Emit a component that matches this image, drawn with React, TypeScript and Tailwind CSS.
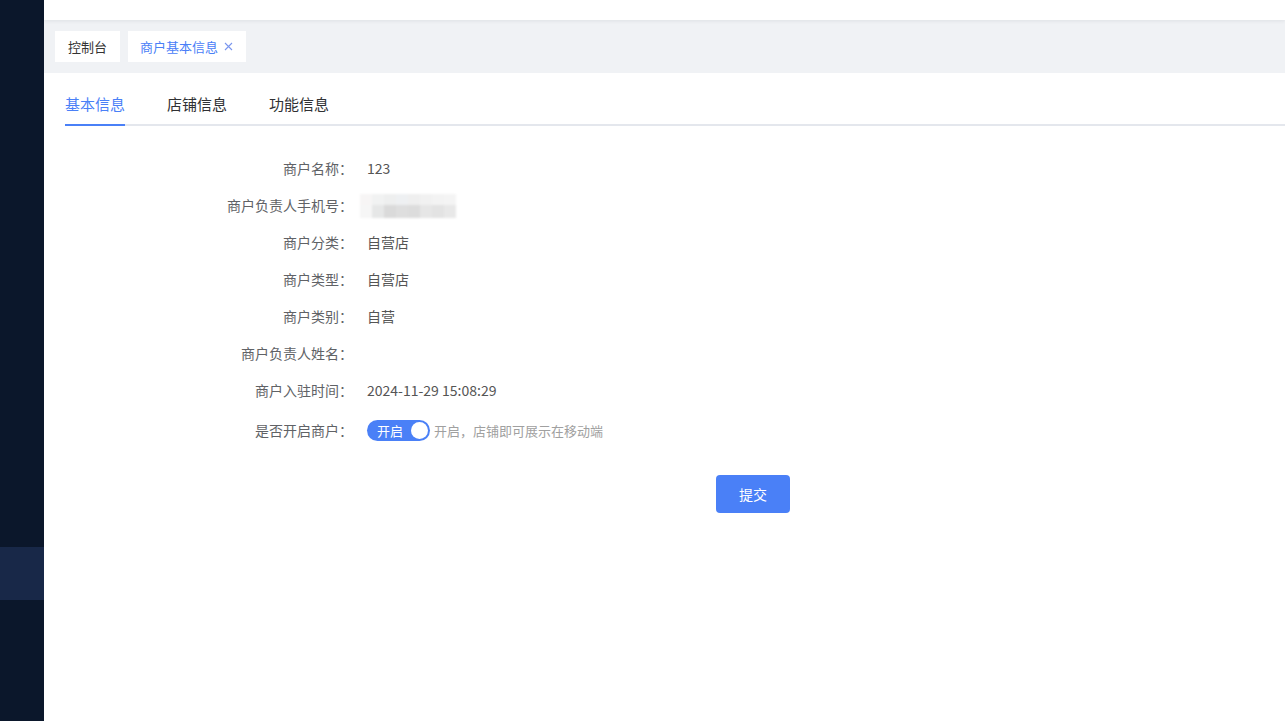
import React from "react";

const rows: { label: string; value?: string; kind?: string }[] = [
  { label: "商户名称：", value: "123" },
  { label: "商户负责人手机号：", kind: "blur" },
  { label: "商户分类：", value: "自营店" },
  { label: "商户类型：", value: "自营店" },
  { label: "商户类别：", value: "自营" },
  { label: "商户负责人姓名：", value: "" },
  { label: "商户入驻时间：", value: "2024-11-29 15:08:29" },
  { label: "是否开启商户：", kind: "switch" },
];

const BlurredPhone = () => (
  <div className="flex flex-col w-[96px] -ml-[7px] blur-[1px]">
    <div className="flex h-[11px]">
      <div className="w-[12px] bg-[#f7f5f5]" />
      <div className="w-[12px] bg-[#f1f2f2]" />
      <div className="w-[12px] bg-[#eeefef]" />
      <div className="w-[12px] bg-[#eef0f2]" />
      <div className="w-[12px] bg-[#efefef]" />
      <div className="w-[12px] bg-[#f1f1f1]" />
      <div className="w-[12px] bg-[#f3f3f3]" />
      <div className="w-[12px] bg-[#f4f4f4]" />
    </div>
    <div className="flex h-[13px]">
      <div className="w-[12px] bg-[#f6f6f6]" />
      <div className="w-[12px] bg-[#e6e7e7]" />
      <div className="w-[12px] bg-[#dadada]" />
      <div className="w-[12px] bg-[#dedede]" />
      <div className="w-[12px] bg-[#dcdcdc]" />
      <div className="w-[12px] bg-[#e6e6e6]" />
      <div className="w-[12px] bg-[#e3e3e3]" />
      <div className="w-[12px] bg-[#e8e8e8]" />
    </div>
  </div>
);

const Switch = () => (
  <div className="flex items-center">
    <div className="relative flex items-center w-[63px] h-[21px] rounded-full bg-[#4a80f7]">
      <span className="pl-[10px] text-[13px] text-white leading-none">开启</span>
      <span className="absolute right-[2px] top-[2px] w-[17px] h-[17px] rounded-full bg-white" />
    </div>
    <span className="ml-[4px] text-[13px] text-[#a0a0a0]">开启，店铺即可展示在移动端</span>
  </div>
);

export default function App() {
  return (
    <div
      className="flex w-[1285px] h-[721px] overflow-hidden bg-white"
      style={{ fontFamily: '"Noto Sans CJK SC", "Liberation Sans", sans-serif' }}
    >
      <aside className="w-[44px] shrink-0 bg-[#0b172b] flex flex-col">
        <div className="h-[547px]" />
        <div className="h-[53px] bg-[#182848]" />
      </aside>

      <main className="flex-1 flex flex-col">
        <header className="h-[20px] bg-white shadow-[0_1px_4px_rgba(0,21,41,0.08)] relative z-10" />

        <div className="h-[53px] bg-[#f0f2f5] flex items-center gap-[8px] px-[11px]">
          <div className="h-[31px] px-[13px] bg-white flex items-center text-[13px] text-[#333]">
            控制台
          </div>
          <div className="h-[31px] pl-[12px] pr-[13px] bg-white flex items-center text-[13px] text-[#4a80f7]">
            商户基本信息
            <svg className="ml-[6px]" width="9" height="9" viewBox="0 0 9 9" fill="none" stroke="#7a96ee" strokeWidth="1.1">
              <path d="M1 1l7 7M8 1l-7 7" />
            </svg>
          </div>
        </div>

        <div className="pl-[21px]">
          <nav className="flex border-b-2 border-[#e4e7ed] mt-[20px]">
            <div className="relative h-[31px] text-[15px] text-[#4a80f7] leading-[22px]">
              基本信息
              <span className="absolute left-0 right-0 -bottom-[2px] h-[2px] bg-[#4a80f7]" />
            </div>
            <div className="ml-[42px] h-[31px] text-[15px] text-[#303133] leading-[22px]">店铺信息</div>
            <div className="ml-[42px] h-[31px] text-[15px] text-[#303133] leading-[22px]">功能信息</div>
          </nav>

          <div className="mt-[24px] flex flex-col">
            {rows.map((r) => (
              <div key={r.label} className={`flex items-center ${r.kind === "switch" ? "h-[43px]" : "h-[37px]"}`}>
                <div className="w-[288px] text-right text-[14px] text-[#606266]">{r.label}</div>
                <div className="pl-[14px] text-[14px] text-[#555]">
                  {r.kind === "blur" ? <BlurredPhone /> : r.kind === "switch" ? <Switch /> : r.value}
                </div>
              </div>
            ))}
          </div>

          <div className="mt-[23px] pl-[651px]">
            <button className="w-[74px] h-[38px] rounded-[4px] bg-[#4a80f7] text-white text-[14px]">提交</button>
          </div>
        </div>
      </main>
    </div>
  );
}
